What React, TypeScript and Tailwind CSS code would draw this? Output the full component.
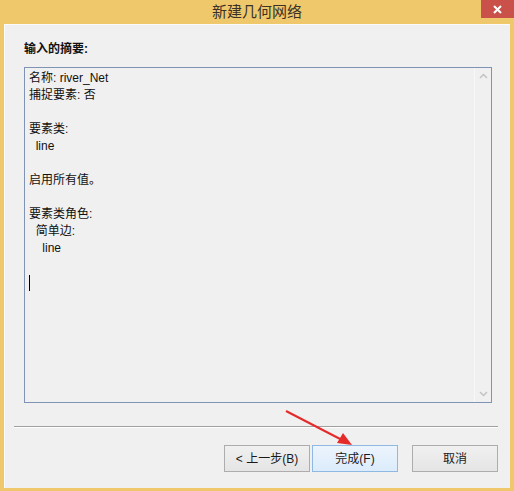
const font = { fontFamily: '"Liberation Sans", "Noto Sans CJK SC", sans-serif' };

const lines = [
  "名称: river_Net",
  "捕捉要素: 否",
  "",
  "要素类:",
  "  line",
  "",
  "启用所有值。",
  "",
  "要素类角色:",
  "  简单边:",
  "    line",
  "",
];

function Button({ label, primary }: { label: string; primary?: boolean }) {
  return (
    <div
      className={`h-[27px] flex items-center justify-center text-[12px] text-[#1a1a1a] border ${
        primary
          ? "w-[86px] border-[#8fb8e2] bg-gradient-to-b from-[#ecf4fc] to-[#dcecfc]"
          : "w-[86px] border-[#adadad] bg-gradient-to-b from-[#f0f0f0] to-[#e5e5e5]"
      }`}
    >
      {label}
    </div>
  );
}

export default function App() {
  return (
    <div className="relative w-[514px] h-[491px] bg-[#f0c86c] flex flex-col overflow-hidden" style={font}>
      <div className="h-[24px] flex items-start shrink-0">
        <div className="w-[33px]" />
        <div className="flex-1 h-[24px] flex items-center justify-center text-[15px] text-[#3a3226]">
          新建几何网络
        </div>
        <div className="w-[33px] h-[18px] bg-[#c9514a] flex items-center justify-center">
          <svg width="9" height="9" viewBox="0 0 9 9">
            <path d="M1 1L8 8M8 1L1 8" stroke="#fff" strokeWidth="2" />
          </svg>
        </div>
      </div>

      <div className="flex-1 ml-[4px] mr-[4px] mb-[3px] bg-[#f0f0f0] border-t border-l border-[#fbfbfb] flex flex-col">
        <div className="ml-[19px] mt-[16px] h-[16px] leading-[16px] text-[12px] font-bold text-[#111]">输入的摘要:</div>

        <div className="ml-[19px] mt-[10px] w-[468px] h-[336px] border border-[#7f93b4] flex">
          <div className="flex-1 pl-[4px] pt-[2px] text-[12px] leading-[17px] text-[#111] whitespace-pre">
            {lines.map((l, i) => (
              <div key={i} className="h-[17px]">
                {l}
              </div>
            ))}
            <div className="h-[17px] flex items-center">
              <div className="w-[1px] h-[16px] bg-black" />
            </div>
          </div>
          <div className="w-[17px] border-l border-[#f8f8f8] bg-[#f0f0f0] flex flex-col items-center justify-between py-[5px]">
            <svg width="9" height="6" viewBox="0 0 9 6">
              <path d="M1 5L4.5 1.5L8 5" stroke="#c2c2c2" strokeWidth="1.5" fill="none" />
            </svg>
            <svg width="9" height="6" viewBox="0 0 9 6">
              <path d="M1 1L4.5 4.5L8 1" stroke="#c2c2c2" strokeWidth="1.5" fill="none" />
            </svg>
          </div>
        </div>

        <div className="ml-[9px] mt-[23px] w-[484px] h-[2px] border-t border-[#a0a0a0] border-b border-b-white" />

        <div className="mt-[17px] mr-[12px] flex justify-end">
          <div className="flex gap-[2px]">
            <Button label="< 上一步(B)" />
            <Button label="完成(F)" primary />
          </div>
          <div className="ml-[14px]">
            <Button label="取消" />
          </div>
        </div>
      </div>

      <svg className="absolute left-0 top-0 pointer-events-none" width="514" height="491">
        <path d="M286 411L344 441" stroke="#e52a2a" strokeWidth="2" />
        <path d="M352 445L337 443L343 433Z" fill="#e52a2a" />
      </svg>
    </div>
  );
}
